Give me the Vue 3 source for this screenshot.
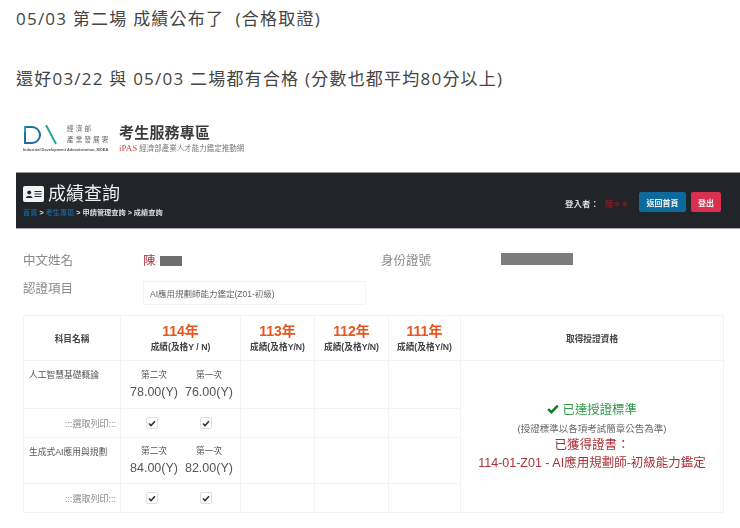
<script setup>
const years = [
  { y: '113年', s: '成績(及格Y/N)' },
  { y: '112年', s: '成績(及格Y/N)' },
  { y: '111年', s: '成績(及格Y/N)' },
]
const subjects = [
  { name: '人工智慧基礎概論', a: '78.00(Y)', b: '76.00(Y)' },
  { name: '生成式AI應用與規劃', a: '84.00(Y)', b: '82.00(Y)' },
]
</script>

<template>
  <div class="page">
    <p class="post first">05/03 第二場 成績公布了&nbsp; (合格取證)</p>
    <p class="post second">還好03/22 與 05/03 二場都有合格 (分數也都平均80分以上)</p>

    <div class="shot">
      <header class="brand">
        <div class="logo">
          <div class="logo-top">
            <svg width="36" height="20" viewBox="0 0 36 20">
              <path d="M2 2h7a8 8 0 0 1 0 16H2z" fill="none" stroke="#1f6f9f" stroke-width="2" />
              <path d="M2 1v6" stroke="#2fa79a" stroke-width="2" />
              <path d="M23 0l10 19" stroke="#2aa58f" stroke-width="2" />
            </svg>
            <div class="org"><span>經濟部</span><span>產業發展署</span></div>
          </div>
          <div class="org-en">Industrial Development Administration, MOEA</div>
        </div>
        <div class="brand-side">
          <div class="brand-title">考生服務專區</div>
          <div class="brand-sub"><b>iPAS</b> 經濟部產業人才能力鑑定推動網</div>
        </div>
      </header>

      <section class="bar">
        <div class="bar-left">
          <h1>
            <svg class="id" width="21" height="16" viewBox="0 0 21 16">
              <rect width="21" height="16" rx="2" fill="#f2f2f2" />
              <circle cx="6.2" cy="6.4" r="2" fill="#23272b" />
              <path d="M2.8 12c.3-2.6 6.5-2.6 6.8 0z" fill="#23272b" />
              <path d="M11.5 5.5h7M11.5 8h7M11.5 10.5h7" stroke="#23272b" stroke-width="1" />
            </svg>
            成績查詢
          </h1>
          <div class="crumbs">
            <span class="link">首頁</span> &gt; <span class="link">考生專區</span> &gt; 申請管理查詢 &gt; 成績查詢
          </div>
        </div>
        <div class="bar-right">
          <span class="login">登入者：</span>
          <span class="who">陳＊＊</span>
          <button class="btn blue">返回首頁</button>
          <button class="btn red">登出</button>
        </div>
      </section>

      <section class="form">
        <div class="form-row one">
          <label>中文姓名</label>
          <div class="name">陳<span class="mask name-mask"></span></div>
          <label class="idl">身份證號</label>
          <span class="mask id-mask"></span>
        </div>
        <div class="form-row two">
          <label>認證項目</label>
          <div class="select">AI應用規劃師能力鑑定(Z01-初級)</div>
        </div>
      </section>

      <table class="grid">
        <colgroup>
          <col class="c1" /><col class="c2" /><col class="c3" /><col class="c3" /><col class="c4" /><col />
        </colgroup>
        <thead>
          <tr class="head">
            <th>科目名稱</th>
            <th><div class="yr">114年</div><div class="score-h">成績(及格Y / N)</div></th>
            <th v-for="c in years" :key="c.y"><div class="yr">{{ c.y }}</div><div class="score-h">{{ c.s }}</div></th>
            <th>取得授證資格</th>
          </tr>
        </thead>
        <tbody>
          <template v-for="(s, i) in subjects" :key="s.name">
            <tr class="score-row">
              <td class="subject">{{ s.name }}</td>
              <td>
                <div class="pair">
                  <div class="tr"><small>第二次</small><span>{{ s.a }}</span></div>
                  <div class="tr"><small>第一次</small><span>{{ s.b }}</span></div>
                </div>
              </td>
              <td></td><td></td><td></td>
              <td v-if="i === 0" rowspan="4" class="result">
                <div class="ok"><svg width="12" height="10" viewBox="0 0 12 10"><path d="M1.2 5.2l3.2 3L10.8 1.6" fill="none" stroke="#0f7a24" stroke-width="2.4" /></svg> 已達授證標準</div>
                <div class="note">(授證標準以各項考試簡章公告為準)</div>
                <div class="got">已獲得證書：</div>
                <div class="got">114-01-Z01 - AI應用規劃師-初級能力鑑定</div>
              </td>
            </tr>
            <tr class="print-row">
              <td class="print">:::選取列印:::</td>
              <td>
                <div class="checks">
                  <span class="check"><svg width="8" height="7" viewBox="0 0 8 7"><path d="M1 3.5l2 2L7 1.2" fill="none" stroke="#333" stroke-width="1.6" /></svg></span>
                  <span class="check"><svg width="8" height="7" viewBox="0 0 8 7"><path d="M1 3.5l2 2L7 1.2" fill="none" stroke="#333" stroke-width="1.6" /></svg></span>
                </div>
              </td>
              <td></td><td></td><td></td>
            </tr>
          </template>
        </tbody>
      </table>
    </div>
  </div>
</template>

<style>
html, body { margin: 0; background: #fff; }
</style>

<style scoped>
.page {
  width: 740px;
  height: 528px;
  overflow: hidden;
  font-family: "Open Sans", "Noto Sans CJK TC", sans-serif;
  color: #444;
  background: #fff;
}
.post {
  margin: 0;
  padding-left: 16px;
  font-size: 17px;
  letter-spacing: 1.22px;
  line-height: 22px;
  white-space: nowrap;
}
.first { padding-top: 8px; }
.second { padding-top: 38px; }
.shot {
  padding-top: 13px;
  font-family: "Liberation Sans", "Noto Sans CJK TC", sans-serif;
  filter: blur(0.35px);
}
.brand {
  display: flex;
  gap: 6px;
  padding: 22px 0 0 23px;
  height: 56px;
  box-sizing: border-box;
}
.logo { width: 90px; }
.logo-top { display: flex; gap: 8px; }
.org {
  display: flex;
  flex-direction: column;
  gap: 3px;
  width: 46px;
  font-size: 6.5px;
  line-height: 8px;
  letter-spacing: 2.2px;
  white-space: nowrap;
  color: #666;
}
.org-en {
  margin-top: 2px;
  font-size: 3.9px;
  line-height: 5px;
  font-weight: 700;
  white-space: nowrap;
  color: #555;
}
.brand-side { margin-top: -2px; }
.brand-title {
  font-size: 15px;
  line-height: 20px;
  font-weight: 700;
  letter-spacing: 0.2px;
  color: #3b3b3b;
}
.brand-sub {
  font-size: 7.5px;
  line-height: 10px;
  white-space: nowrap;
  color: #777;
}
.brand-sub b { font-size: 9px; font-family: "Liberation Serif", serif; font-weight: 400; color: #c9483f; }
.bar {
  margin: 13px 0 0 16px;
  height: 57px;
  box-sizing: border-box;
  background: #212529;
  border-top: 1px solid #999;
  border-bottom: 1px solid #aaa;
  display: flex;
  justify-content: space-between;
  align-items: flex-start;
}
.bar-left { padding: 10px 0 0 7px; }
h1 {
  margin: 0;
  display: flex;
  align-items: center;
  gap: 4px;
  font-size: 18px;
  line-height: 22px;
  font-weight: 400;
  color: #eee;
}
.crumbs {
  margin-top: 4px;
  font-size: 7.2px;
  line-height: 8px;
  font-weight: 700;
  color: #ddd;
  white-space: pre;
}
.crumbs .link { color: #1a5f8a; }
.bar-right {
  display: flex;
  align-items: center;
  padding: 19px 19px 0 0;
}
.login { font-size: 8.5px; font-weight: 700; color: #ddd; margin: 2px 6px 0 0; }
.who { font-size: 8px; color: #8f1a1f; margin: 2px 10px 0 0; font-weight: 700; }
.btn {
  height: 20px;
  padding: 0;
  border: 0;
  border-radius: 2px;
  font-family: inherit;
  font-size: 8px;
  font-weight: 700;
  color: #f2f2f2;
}
.blue { width: 47px; background: #0d6a9c; margin-right: 5px; }
.red { width: 30px; background: #d9304f; }
.form { padding: 20px 0 0 23px; color: #8a8a8a; height: 86px; box-sizing: border-box; }
.form-row { display: flex; align-items: center; }
.form-row label { font-size: 12.5px; width: 120px; flex: none; line-height: 14px; }
.one { height: 24px; }
.two { margin-top: 8px; height: 24px; align-items: flex-start; }
.two label { margin-top: 1px; }
.name { width: 238px; font-size: 12.5px; line-height: 14px; color: #b6343c; display: flex; align-items: center; }
.mask { display: block; background: #6e6e6e; }
.name-mask { width: 22px; height: 10px; margin: 0 0 1px 4px; }
.form-row .idl { width: 120px; }
.id-mask { width: 72px; height: 12px; margin-bottom: 4px; background: #7c7c7c; }
.select {
  width: 223px;
  height: 24px;
  box-sizing: border-box;
  padding-left: 6px;
  border: 1px solid #f4f4f4;
  display: flex;
  align-items: center;
  font-size: 8.5px;
  color: #666;
}
.grid {
  width: 701px;
  margin-left: 23px;
  table-layout: fixed;
  border-collapse: collapse;
  font-size: 8.7px;
  color: #555;
}
.c1 { width: 97px; }
.c2 { width: 120px; }
.c3 { width: 74px; }
.c4 { width: 72px; }
th, td { border: 1px solid #f3f3f3; padding: 0; }
th { font-weight: 700; color: #444; font-size: 8.7px; text-align: center; }
.head { height: 45px; }
.yr { font-size: 14px; line-height: 17px; color: #e8541c; font-weight: 700; }
.score-h { font-size: 8.7px; line-height: 14px; white-space: nowrap; }
.score-row:nth-child(1) { height: 48px; }
.score-row:nth-child(3) { height: 46px; }
.print-row { height: 29px; }
.subject { vertical-align: top; padding: 8px 0 0 5px; font-size: 8.75px; line-height: 12px; white-space: nowrap; }
.pair { display: flex; gap: 7px; padding-left: 9px; }
.tr { display: flex; flex-direction: column; align-items: center; gap: 3px; }
.tr small { font-size: 8.7px; line-height: 12px; }
.tr span { font-size: 12.5px; line-height: 16px; color: #555; }
.print { text-align: right; padding-right: 4px; color: #888; font-size: 9px; }
.checks { display: flex; gap: 42px; padding-left: 25px; }
.check {
  width: 12px;
  height: 12px;
  box-sizing: border-box;
  border: 1px solid #ddd;
  border-radius: 2px;
  display: flex;
  align-items: center;
  justify-content: center;
}
.result { text-align: center; }
.ok { font-size: 12.4px; line-height: 17px; color: #2f9a4a; }
.note { font-size: 9.5px; line-height: 14px; margin-top: 3px; color: #666; }
.got { font-size: 12.5px; line-height: 18px; color: #a8323a; white-space: nowrap; }
</style>
